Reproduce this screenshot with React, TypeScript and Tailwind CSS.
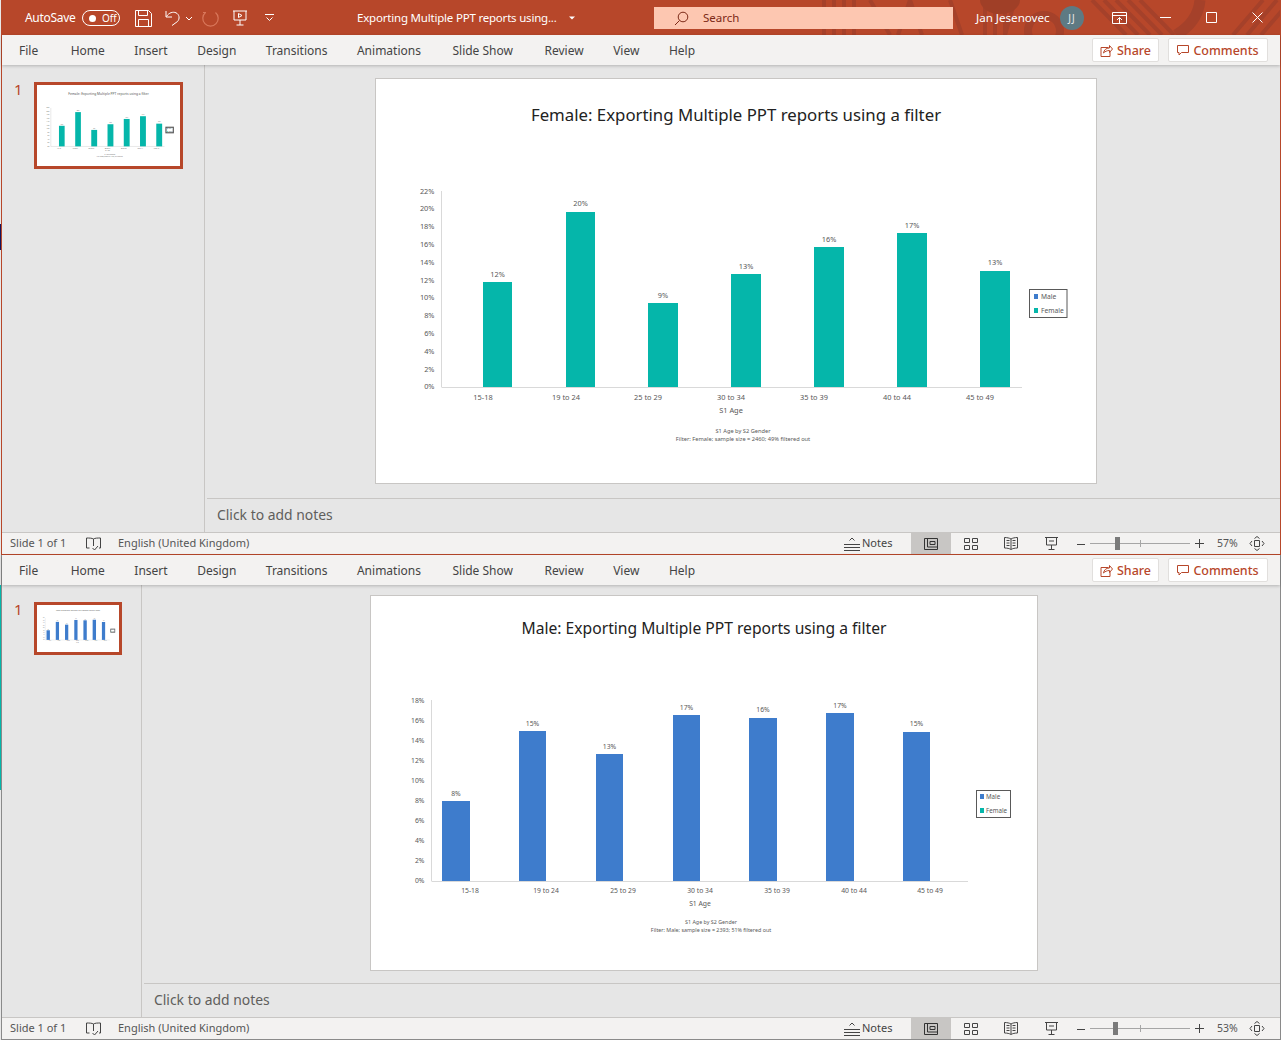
import type { ReactNode } from "react";

const tabs = [
  { name: "File", cls: "mr-[3px]" },
  { name: "Home", cls: "" },
  { name: "Insert", cls: "" },
  { name: "Design", cls: "" },
  { name: "Transitions", cls: "" },
  { name: "Animations", cls: "mr-[2px]" },
  { name: "Slide Show", cls: "mr-[2px]" },
  { name: "Review", cls: "" },
  { name: "View", cls: "" },
  { name: "Help", cls: "" },
];

interface Bar {
  left: number;
  right: number;
  top: number;
  value: string;
  labelY: number;
  name: string;
  nameX: number;
}

interface ChartProps {
  view: string;
  color: string;
  axisX: number;
  axisTop: number;
  axisBottom: number;
  axisEnd: number;
  ticks: { label: string; y: number }[];
  bars: Bar[];
  nameY: number;
  ageX: number;
  ageY: number;
  noteX: number;
  noteY: number;
  note: string;
  fontSize: number;
  noteSize: number;
  legendSize: number;
  legend: { x: number; y: number; w: number; h: number; swatchX: number; textX: number; maleY: number; femaleY: number };
}

const makeTicks = (max: number, top: number, step: number) => {
  const out = [];
  for (let v = max, i = 0; v >= 0; v -= 2, i++) out.push({ label: `${v}%`, y: top + i * step });
  return out;
};

const female: ChartProps = {
  view: "376 140 720 343",
  color: "#05b6aa",
  axisX: 441.5,
  axisTop: 191,
  axisBottom: 387,
  axisEnd: 1022,
  ticks: makeTicks(22, 191, 17.8),
  bars: [
    { left: 483, right: 512, top: 282, value: "12%", labelY: 274, name: "15-18", nameX: 483 },
    { left: 566, right: 595, top: 212, value: "20%", labelY: 203, name: "19 to 24", nameX: 566 },
    { left: 648, right: 678, top: 303, value: "9%", labelY: 295, name: "25 to 29", nameX: 648 },
    { left: 731, right: 761, top: 274, value: "13%", labelY: 266, name: "30 to 34", nameX: 731 },
    { left: 814, right: 844, top: 247, value: "16%", labelY: 239, name: "35 to 39", nameX: 814 },
    { left: 897, right: 927, top: 233, value: "17%", labelY: 225, name: "40 to 44", nameX: 897 },
    { left: 980, right: 1010, top: 271, value: "13%", labelY: 262, name: "45 to 49", nameX: 980 },
  ],
  nameY: 397,
  ageX: 731,
  ageY: 410,
  noteX: 743,
  noteY: 431,
  note: "Filter: Female; sample size = 2460; 49% filtered out",
  fontSize: 7.4,
  noteSize: 5.7,
  legendSize: 6.7,
  legend: { x: 1029.5, y: 289.5, w: 37.5, h: 28, swatchX: 1034, textX: 1041, maleY: 294, femaleY: 308 },
};

const male: ChartProps = {
  view: "371 657 666 313",
  color: "#3e7ccc",
  axisX: 431.5,
  axisTop: 700,
  axisBottom: 881,
  axisEnd: 968,
  ticks: makeTicks(18, 700, 20.1),
  bars: [
    { left: 442, right: 470, top: 801, value: "8%", labelY: 793, name: "15-18", nameX: 470 },
    { left: 519, right: 546, top: 731, value: "15%", labelY: 723, name: "19 to 24", nameX: 546 },
    { left: 596, right: 623, top: 754, value: "13%", labelY: 746, name: "25 to 29", nameX: 623 },
    { left: 673, right: 700, top: 715, value: "17%", labelY: 707, name: "30 to 34", nameX: 700 },
    { left: 749, right: 777, top: 718, value: "16%", labelY: 709, name: "35 to 39", nameX: 777 },
    { left: 826, right: 854, top: 713, value: "17%", labelY: 705, name: "40 to 44", nameX: 854 },
    { left: 903, right: 930, top: 732, value: "15%", labelY: 723, name: "45 to 49", nameX: 930 },
  ],
  nameY: 890,
  ageX: 700,
  ageY: 903,
  noteX: 711,
  noteY: 922,
  note: "Filter: Male; sample size = 2393; 51% filtered out",
  fontSize: 6.8,
  noteSize: 5.35,
  legendSize: 6.2,
  legend: { x: 976.5, y: 790.5, w: 34, h: 27, swatchX: 980, textX: 986, maleY: 794, femaleY: 808 },
};

const Chart = ({ chart, className, thumb = false }: { chart: ChartProps; className: string; thumb?: boolean }) => {
  const { legend } = chart;
  return (
    <svg viewBox={chart.view} className={className} fontFamily="'Noto Sans', sans-serif" fill="#595959" fontSize={chart.fontSize}>
      <line x1={chart.axisX} x2={chart.axisX} y1={chart.axisTop} y2={chart.axisBottom} stroke="#d9d9d9" strokeWidth={thumb ? 3 : 1} />
      <line x1={chart.axisX} x2={chart.axisEnd} y1={chart.axisBottom + 0.5} y2={chart.axisBottom + 0.5} stroke="#d9d9d9" strokeWidth={thumb ? 3 : 1} />
      {chart.ticks.map((t) => (
        <text key={t.label} x={chart.axisX - 7} y={t.y + 2.5} textAnchor="end">{t.label}</text>
      ))}
      {chart.bars.map((b) => (
        <g key={b.name}>
          <rect x={b.left} y={b.top} width={b.right - b.left} height={chart.axisBottom - b.top} fill={chart.color} />
          <text x={(b.left + b.right) / 2} y={b.labelY + 2.5} textAnchor="middle">{b.value}</text>
          <text x={b.nameX} y={chart.nameY + 2.5} textAnchor="middle">{b.name}</text>
        </g>
      ))}
      <text x={chart.ageX} y={chart.ageY + 2.5} textAnchor="middle">S1 Age</text>
      <text x={chart.noteX} y={chart.noteY + 2} textAnchor="middle" fontSize={chart.noteSize}>S1 Age by S2 Gender</text>
      <text x={chart.noteX} y={chart.noteY + 10} textAnchor="middle" fontSize={chart.noteSize}>{chart.note}</text>
      <rect x={legend.x} y={legend.y} width={legend.w} height={legend.h} fill="#fff" stroke="#595959" strokeWidth={thumb ? 6 : 1} />
      <rect x={legend.swatchX} y={legend.maleY} width="4" height="5" fill="#3e7ccc" />
      <rect x={legend.swatchX} y={legend.femaleY} width="4" height="5" fill="#05b6aa" />
      <text x={legend.textX} y={legend.maleY + 5} fontSize={chart.legendSize}>Male</text>
      <text x={legend.textX} y={legend.femaleY + 5} fontSize={chart.legendSize}>Female</text>
    </svg>
  );
};

const Ico = ({ w, h = w, children, stroke = "#fff", className = "" }: { w: number; h?: number; children: ReactNode; stroke?: string; className?: string }) => (
  <svg width={w} height={h} viewBox={`0 0 ${w} ${h}`} fill="none" stroke={stroke} strokeWidth="1" className={`shrink-0 ${className}`}>
    {children}
  </svg>
);

const TitleBar = () => (
  <div className="relative flex h-[35px] items-center overflow-hidden bg-[#b7472a] pt-px text-white">
    <svg className="absolute left-[778px] top-0" width="500" height="35" viewBox="0 0 500 35" fill="none" stroke="#a5412a">
      <path d="M44 0v35M54 0v35M64 0v35M74 0v35M90 0l20 35M130 0l-12 35M130 0l12 35M170 0l12 35M205 0v35M215 0v35M225 0v35M235 0l-10 35" strokeWidth="4" />
      <path d="M200 0h40a20 14 0 0 1-40 0z" fill="#a03f27" stroke="none" />
      <circle cx="264" cy="31" r="16" strokeWidth="8" />
      <path d="M312 0l34 35M324 0l34 35M336 0l34 35M348 0l34 35M360 0l34 35" strokeWidth="4" />
      <path d="M420 0q-2 22-24 35" strokeWidth="11" />
      <path d="M483 0l-30 35M497 0l-30 35M511 0l-30 35" strokeWidth="4" />
    </svg>
    <div className="relative flex w-[355px] shrink-0 items-center pl-[23px]">
      <span className="w-[50px] whitespace-nowrap text-[12px] tracking-[-0.3px]">AutoSave</span>
      <div className="ml-[7px] flex h-[16px] w-[38px] items-center rounded-full border border-white pl-[6px]">
        <span className="h-[7px] w-[7px] rounded-full bg-white" />
        <span className="ml-[6px] text-[10px]">Off</span>
      </div>
      <Ico w={17} className="ml-[15px]">
        <path d="M.5 .5h13l3 3v13H.5z" />
        <path d="M3.500 .5v5h9v-5M3.500 16.500v-7h10v7" />
      </Ico>
      <Ico w={16} className="ml-[13px]">
        <path d="M1 1v6h6M1.500 6.500C4 2.500 8 1.500 11 2.800c3.500 1.700 4 6 1.500 8.700L7 15.500" />
      </Ico>
      <Ico w={8} h={5} className="ml-[4px]">
        <path d="M1 1l3 3 3-3" />
      </Ico>
      <Ico w={17} stroke="#d9775b" className="ml-[9px]">
        <path d="M3.500 2.500A7.700 7.700 0 1 0 13.500 2.500" strokeWidth="1.200" />
        <path d="M1 2.500h3" />
      </Ico>
      <Ico w={16} className="ml-[13px]">
        <path d="M1 1h14M2 1v9h12V1M8 10v5M4.500 15h7" />
        <path d="M6.500 3.500l3.500 2-3.500 2z" />
      </Ico>
      <Ico w={9} h={8} className="ml-[17px]">
        <path d="M0 .5h9M1.500 3.500L4.500 6.500l3-3" />
      </Ico>
    </div>
    <div className="relative flex w-[297px] shrink-0 items-center">
      <span className="w-[201px] whitespace-nowrap text-[11.500px] tracking-[-0.2px]">Exporting Multiple PPT reports using...</span>
      <Ico w={6} h={4} className="ml-[11px]">
        <path d="M0 .5h6L3 3.500z" fill="#fff" stroke="none" />
      </Ico>
    </div>
    <div className="relative flex h-[22px] w-[299px] shrink-0 items-center bg-[#fdc7b1] pl-[20px] text-[11.500px] text-[#7c2a17]">
      <Ico w={15} stroke="#7c2a17">
        <circle cx="9" cy="6" r="4.800" />
        <path d="M5.500 9.500L1 14" />
      </Ico>
      <span className="ml-[14px]">Search</span>
    </div>
    <span className="relative ml-[23px] w-[84px] shrink-0 whitespace-nowrap text-[11.600px]">Jan Jesenovec</span>
    <span className="relative flex h-[24px] w-[24px] shrink-0 items-center justify-center rounded-full bg-[#5e7a83] text-[10px] tracking-[1px] text-[#e8e8e8]">JJ</span>
    <div className="relative ml-[12px] flex">
      <div className="flex w-[46px] justify-center">
        <Ico w={15} h={12}>
          <path d="M.5 .5h14v11H.5zM.5 3.500h14M7.500 11V5.500M5 8l2.500-2.500L10 8" />
        </Ico>
      </div>
      <div className="flex w-[46px] justify-center">
        <Ico w={11} h={11}>
          <path d="M0 5.500h11" />
        </Ico>
      </div>
      <div className="flex w-[46px] justify-center">
        <Ico w={11} h={11}>
          <path d="M.5 .5h10v10H.5z" />
        </Ico>
      </div>
      <div className="flex w-[46px] justify-center">
        <Ico w={11} h={11}>
          <path d="M.5 .5l10 10M10.500 .5l-10 10" />
        </Ico>
      </div>
    </div>
  </div>
);

const Ribbon = () => (
  <div className="relative z-10 flex h-[30px] items-center bg-[#f3f2f1] pl-[17px] pr-[12px] shadow-[0_1px_3px_rgba(0,0,0,0.22)]">
    <div className="flex gap-[29.500px] pt-[2px] text-[12px] text-[#444]">
      {tabs.map((t) => (
        <span key={t.name} className={`whitespace-nowrap ${t.cls}`}>{t.name}</span>
      ))}
    </div>
    <div className="ml-auto flex gap-[9px] text-[12.500px] font-medium text-[#b7472a]">
      <div className="flex h-[24px] w-[67px] items-center justify-center gap-[4px] rounded-[2px] border border-[#e1dfdd] bg-white">
        <Ico w={13} stroke="#b7472a">
          <path d="M8.500 3.500H1v9h9V8" />
          <path d="M3.500 9c.5-3 2.500-5 6-5V1.500L12.500 5 9.500 8.500V6.500C7 6.500 5 7.500 3.500 9z" />
        </Ico>
        <span className="pt-[2px]">Share</span>
      </div>
      <div className="flex h-[24px] w-[100px] items-center justify-center gap-[4px] rounded-[2px] border border-[#e1dfdd] bg-white">
        <Ico w={12} stroke="#b7472a">
          <path d="M.5 1.500h11v7H4.500L2 11V8.500H.5z" />
        </Ico>
        <span className="pt-[2px]">Comments</span>
      </div>
    </div>
  </div>
);

const StatusBar = ({ zoom, thumbClass }: { zoom: string; thumbClass: string }) => (
  <div className="flex h-[22px] shrink-0 items-center border-t border-[#c8c6c4] bg-[#f3f2f1] pl-[8px] text-[11px] text-[#555]">
    <span className="w-[57px] whitespace-nowrap">Slide 1 of 1</span>
    <Ico w={15} h={14} stroke="#444" className="ml-[19px]">
      <path d="M7.500 2C6 1 3 1 .5 1v10h3M7.500 2c1.500-1 4-1 7-1v10H13M7.500 2v7" />
      <path d="M6.500 11l2 2 3.500-4" />
    </Ico>
    <span className="ml-[17px] whitespace-nowrap">English (United Kingdom)</span>
    <div className="ml-auto flex h-full items-center">
      <Ico w={16} h={14} stroke="#444">
        <path d="M0 7.500h16M0 10.500h16M0 13.500h16M5.500 3.500L8 1l2.500 2.500" />
      </Ico>
      <span className="ml-[2px] w-[49px] text-[#444]">Notes</span>
      <div className="flex h-full w-[40px] items-center justify-center bg-[#c8c6c4]">
        <Ico w={14} h={12} stroke="#333">
          <path d="M.5 .5h13v11H.5zM3.500 .5v8.500h10M6 3.500h5v3H6z" />
        </Ico>
      </div>
      <div className="flex w-[40px] justify-center">
        <Ico w={14} h={12} stroke="#444">
          <path d="M.5 .5h5v4h-5zM8.500 .5h5v4h-5zM.5 7.500h5v4h-5zM8.500 7.500h5v4h-5z" />
        </Ico>
      </div>
      <div className="flex w-[40px] justify-center">
        <Ico w={14} h={13} stroke="#444">
          <path d="M7 2C5.500 1 3 .5 .5 .5v10.500c2.500 0 5 .5 6.500 1.500 1.500-1 4-1.500 6.500-1.500V.5C11 .5 8.500 1 7 2zM7 2v10M2.500 3.500h3M2.500 6h3M2.500 8.500h3M8.500 3.500h3M8.500 6h3M8.500 8.500h3" />
        </Ico>
      </div>
      <div className="flex w-[40px] justify-center">
        <Ico w={13} stroke="#444">
          <path d="M0 .5h13M1.500 .5v7.500h10V.5M6.500 8v4.500M3.500 12.500h6M4 4h5" />
        </Ico>
      </div>
      <Ico w={8} h={8} stroke="#444" className="ml-[6px]">
        <path d="M0 4.500h8" />
      </Ico>
      <div className="relative ml-[5px] h-px w-[100px] bg-[#a6a6a6]">
        <span className={`absolute -top-[6px] h-[13px] w-[5px] bg-[#7a7a7a] ${thumbClass}`} />
        <span className="absolute left-[50px] -top-[3px] h-[7px] w-px bg-[#a6a6a6]" />
      </div>
      <Ico w={9} h={9} stroke="#444" className="ml-[5px]">
        <path d="M0 4.500h9M4.500 0v9" />
      </Ico>
      <span className="ml-[13px] w-[32px] text-[10.500px] text-[#555]">{zoom}</span>
      <Ico w={16} h={15} stroke="#444" className="mr-[15px]">
        <path d="M5.500 4.500h5v6h-5zM3 5L1 7.500 3 10M13 5l2 2.500L13 10M5.500 2.500L8 .5l2.500 2M5.500 12.500l2.500 2 2.500-2" />
      </Ico>
    </div>
  </div>
);

interface WindowProps {
  chart: ChartProps;
  title: string;
  titleClass: string;
  thumbTitleClass: string;
  paneClass: string;
  slideClass: string;
  thumbClass: string;
  chartClass: string;
  zoom: string;
  sliderClass: string;
  borderClass: string;
}

const Window = (p: WindowProps) => (
  <div className={`flex min-h-0 flex-1 flex-col border-l border-r ${p.borderClass}`}>
    <div className="flex min-h-0 flex-1 bg-[#e6e6e6]">
      <div className={`shrink-0 border-r border-[#c8c6c4] pl-[12px] pt-[17px] ${p.paneClass}`}>
        <div className="flex gap-[11px]">
          <span className="w-[9px] text-[15px] leading-[14px] text-[#b7472a]">1</span>
          <div className={`shrink-0 border-[3px] border-[#b7472a] bg-white p-px ${p.thumbClass}`}>
            <p className={`whitespace-nowrap text-center text-[#555] ${p.thumbTitleClass}`}>{p.title}</p>
            <Chart chart={p.chart} className="block w-full" thumb />
          </div>
        </div>
      </div>
      <div className="flex min-w-0 flex-1 flex-col pl-[2px]">
        <div className="min-h-0 flex-1">
          <div className={`border border-[#c8c6c4] bg-white ${p.slideClass}`}>
            <p className={`whitespace-nowrap text-center text-[#222] ${p.titleClass}`}>{p.title}</p>
            <Chart chart={p.chart} className={`block ${p.chartClass}`} />
          </div>
        </div>
        <div className="flex h-[34px] shrink-0 items-center border-t border-[#c8c6c4] pb-px pl-[10px] text-[13.900px] text-[#605e5c]">Click to add notes</div>
      </div>
    </div>
    <StatusBar zoom={p.zoom} thumbClass={p.sliderClass} />
  </div>
);

export default function App() {
  return (
    <div className="flex h-[1040px] w-[1281px] flex-col bg-[#e6e6e6] font-['Noto_Sans',sans-serif]">
      <div className="flex h-[555px] shrink-0">
        <div className="flex w-px shrink-0 flex-col bg-[#e8e8e8]">
          <div className="mt-[224px] h-[26px] bg-[#14145a]" />
        </div>
        <div className="flex min-w-0 flex-1 flex-col border-b border-[#b7472a]">
          <div className="border-l border-r border-[#b7472a]">
            <TitleBar />
            <Ribbon />
          </div>
          <Window
            chart={female}
            title="Female: Exporting Multiple PPT reports using a filter"
            titleClass="pt-[23px] h-[61px] text-[16.800px] leading-[26px]"
            thumbTitleClass="pt-[5px] h-[12px] text-[3.300px] leading-[5px]"
            paneClass="w-[203px]"
            slideClass="ml-[168px] mt-[13px] w-[722px] h-[406px]"
            thumbClass="w-[149px] h-[87px]"
            chartClass="w-[720px]"
            zoom="57%"
            sliderClass="left-[25px]"
            borderClass="border-[#b7472a]"
          />
        </div>
      </div>
      <div className="flex min-h-0 flex-1">
        <div className="flex w-px shrink-0 flex-col bg-[#e8e8e8]">
          <div className="mt-[30px] h-[205px] bg-[#05b6aa]" />
        </div>
        <div className="flex min-w-0 flex-1 flex-col border-b border-[#8a8a8a]">
          <div className="border-l border-r border-[#8a8a8a]">
            <Ribbon />
          </div>
          <Window
            chart={male}
            title="Male: Exporting Multiple PPT reports using a filter"
            titleClass="pt-[19px] h-[61px] text-[15.650px] leading-[26px]"
            thumbTitleClass="pt-[3px] h-[7px] text-[1.900px] leading-[3px]"
            paneClass="w-[140px]"
            slideClass="ml-[226px] mt-[10px] w-[668px] h-[376px]"
            thumbClass="w-[88px] h-[53px]"
            chartClass="w-[666px]"
            zoom="53%"
            sliderClass="left-[23px]"
            borderClass="border-[#8a8a8a]"
          />
        </div>
      </div>
    </div>
  );
}
